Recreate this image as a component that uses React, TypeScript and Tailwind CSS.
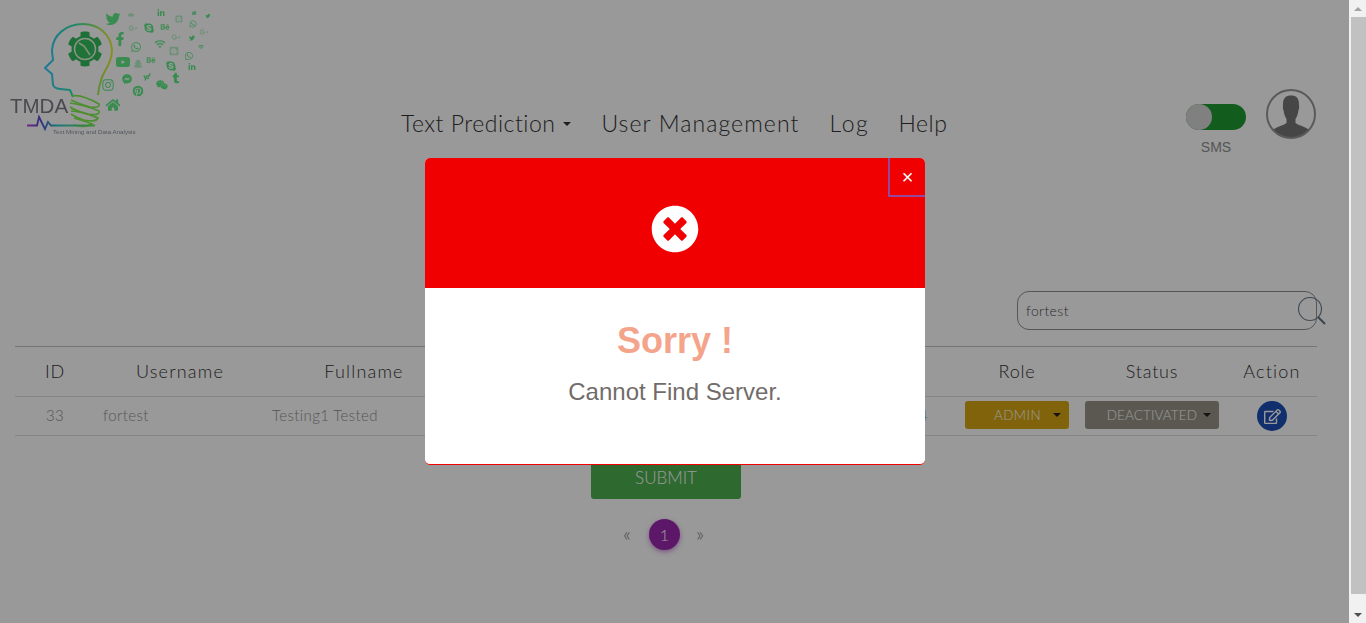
import {
  FaAndroid,
  FaBehance,
  FaBlogger,
  FaCog,
  FaFacebookF,
  FaFacebookMessenger,
  FaGooglePlusG,
  FaHome,
  FaInstagram,
  FaLinkedinIn,
  FaPinterest,
  FaRegEdit,
  FaSkype,
  FaSnapchatGhost,
  FaTimesCircle,
  FaTumblr,
  FaTwitter,
  FaWeixin,
  FaWhatsapp,
  FaWifi,
  FaYahoo,
  FaYoutube,
} from "react-icons/fa";

const dark = "#5fe884";
const light = "#b8f0c8";

// [icon, centre x, centre y, size, colour]
const logoIcons = [
  [FaTwitter, 113, 19, 15, dark],
  [FaAndroid, 131, 15, 7, light],
  [FaLinkedinIn, 161, 13, 8, dark],
  [FaBlogger, 179, 19, 8, light],
  [FaHome, 194, 13, 5, dark],
  [FaTwitter, 208, 16, 5, dark],
  [FaGooglePlusG, 133, 28, 9, light],
  [FaSkype, 149, 28, 11, dark],
  [FaBehance, 165, 27, 9, dark],
  [FaWhatsapp, 193, 24, 8, dark],
  [FaGooglePlusG, 204, 32, 9, light],
  [FaFacebookF, 120, 39, 14, dark],
  [FaGooglePlusG, 176, 37, 9, light],
  [FaWhatsapp, 136, 47, 11, dark],
  [FaWifi, 160, 44, 11, dark],
  [FaBlogger, 174, 51, 10, light],
  [FaTwitter, 192, 38, 6, dark],
  [FaWifi, 201, 47, 6, dark],
  [FaWhatsapp, 189, 56, 9, dark],
  [FaYoutube, 123, 62, 15, dark],
  [FaSnapchatGhost, 138, 64, 9, light],
  [FaBehance, 151, 60, 9, dark],
  [FaSkype, 171, 66, 11, dark],
  [FaLinkedinIn, 192, 67, 8, dark],
  [FaFacebookMessenger, 127, 79, 10, dark],
  [FaYahoo, 147, 77, 8, dark],
  [FaTumblr, 176, 78, 11, dark],
  [FaWeixin, 162, 85, 12, dark],
  [FaInstagram, 108, 85, 13, dark],
  [FaPinterest, 138, 91, 11, dark],
  [FaHome, 113, 105, 15, dark],
] as const;

function Logo() {
  return (
    <svg width="230" height="146" viewBox="0 0 230 146" className="block shrink-0 blur-[0.4px]">
      <defs>
        <linearGradient id="bulb" x1="45" y1="0" x2="112" y2="0" gradientUnits="userSpaceOnUse">
          <stop offset="0" stopColor="#33c8ff" />
          <stop offset="0.45" stopColor="#35e5a5" />
          <stop offset="1" stopColor="#e6ee33" />
        </linearGradient>
        <linearGradient id="ecg" x1="27" y1="0" x2="95" y2="0" gradientUnits="userSpaceOnUse">
          <stop offset="0" stopColor="#c040e0" />
          <stop offset="0.2" stopColor="#5050d0" />
          <stop offset="0.45" stopColor="#30c8d0" />
          <stop offset="1" stopColor="#70e850" />
        </linearGradient>
      </defs>
      <path
        d="M98 95C99 86 101 78 105 71C110 63 112 57 112 50C111 34 98 24 83 24C66 24 53 35 52 50C52 55 53 58 53 60L45 68L52 74L53 85C55 90 62 89 70 90L73 97"
        fill="none"
        stroke="url(#bulb)"
        strokeWidth="2"
        strokeLinejoin="round"
      />
      <g fill="none" stroke="#80ee50" strokeWidth="1.700">
        <path d="M72 96C80 94 92 100 99 104C100 107 96 108 90 107C82 105 75 102 71 100" />
        <path d="M70 103C78 104 92 108 99 111C100 115 94 115 88 114C80 112 74 110 70 107" />
        <path d="M71 111C80 111 90 115 98 118C96 122 90 121 84 120C79 119 74 116 71 114" />
        <path d="M74 118C80 120 88 122 92 124C88 127 80 127 74 125" />
      </g>
      <FaCog x={67} y={31} size={36} color="#33bb5c" />
      <circle cx="85" cy="49" r="10.500" fill="#35c060" stroke="#e8f5e0" strokeWidth="1.500" />
      <path d="M79 43L84 46L90 55" fill="none" stroke="#e0f0d0" strokeWidth="1.500" />
      {logoIcons.map(([Icon, x, y, size, color], i) => (
        <Icon key={i} x={x - size / 2} y={y - size / 2} size={size} color={color} />
      ))}
      <text x="10" y="113" fontFamily="Liberation Sans, sans-serif" fontSize="20.500" fill="#7b7b85">
        TMDA
      </text>
      <path
        d="M27 125.500L37 125.500L39 117L45 129L48 122L51 125.500L95 125.500"
        fill="none"
        stroke="url(#ecg)"
        strokeWidth="1.800"
      />
      <text x="53" y="134" fontFamily="Liberation Sans, sans-serif" fontSize="6.200" fill="#8a929c">
        Text Mining and Data Analysis
      </text>
    </svg>
  );
}

function Avatar() {
  return (
    <svg width="50" height="50" viewBox="0 0 50 50" className="block">
      <clipPath id="avatar">
        <circle cx="25" cy="25" r="24" />
      </clipPath>
      <g clipPath="url(#avatar)" fill="#767676">
        <path d="M25 6.500C20 6.500 17 9 17 15C17 18 16.500 20 17.500 21C18 25 19 28 20.500 30V34C17 37 8 38 5 43V50H45V43C42 38 33 37 29.500 34V30C31 28 32 25 32.500 21C33.500 20 33 18 33 15C33 9 30 6.500 25 6.500Z" />
      </g>
      <circle cx="25" cy="25" r="24" fill="none" stroke="#969696" strokeWidth="2" />
    </svg>
  );
}

function Caret({ className }: { className: string }) {
  return <span className={`inline-block border-x-[4px] border-t-[4px] border-x-transparent ${className}`} />;
}

function Scrollbar() {
  return (
    <div className="flex w-[17px] shrink-0 flex-col items-center bg-[#f1f1f1]">
      <div className="flex h-[17px] w-full items-center justify-center">
        <span className="border-x-[4px] border-b-[4px] border-x-transparent border-b-[#a3a3a3]" />
      </div>
      <div className="ml-[2px] h-[577px] w-[15px] bg-[#c1c1c1]" />
      <div className="mt-auto flex h-[17px] w-full items-center justify-center">
        <span className="border-x-[4px] border-t-[4px] border-x-transparent border-t-[#505050]" />
      </div>
    </div>
  );
}

function Modal() {
  return (
    <div className="absolute inset-0 bg-black/40">
      <div className="ml-[425px] mt-[158px] h-[307px] w-[500px] overflow-hidden rounded-[5px] border-b border-[#f00000] bg-white font-['Liberation_Sans',sans-serif]">
        <div className="relative flex h-[130px] items-center justify-center bg-[#f00000]">
          <FaTimesCircle size={48} color="#ffffff" className="ml-[-1px] mt-[12px]" />
          <button className="absolute right-0 top-0 flex h-[39px] w-[37px] items-center justify-center border-b-2 border-l-2 border-[#96489a] text-[20px] leading-none text-white">
            ×
          </button>
        </div>
        <div className="flex flex-col items-center pt-[31px]">
          <h2 className="text-[36px] font-bold leading-[44px] text-[#f5a48c]">Sorry !</h2>
          <p className="mt-[14px] text-[24px] leading-[30px] text-[#716c69]">Cannot Find Server.</p>
        </div>
      </div>
    </div>
  );
}

export default function App() {
  return (
    <div className="flex h-[623px] overflow-hidden bg-white font-['Lato',sans-serif] font-light">
      <div className="relative min-w-0 flex-1">
        <header className="flex h-[146px]">
          <Logo />
          <nav className="ml-[171px] mt-[108px] flex h-[30px] items-center text-[23px] text-[#333333]">
            <a className="flex items-center tracking-[0.5px]">
              Text Prediction
              <Caret className="ml-[8px] mt-[2px] border-t-[#333333]" />
            </a>
            <a className="ml-[30px] tracking-[1.1px]">User Management</a>
            <a className="ml-[30px] tracking-[1.6px]">Log</a>
            <a className="ml-[29px] tracking-[0.6px]">Help</a>
          </nav>
          <div className="ml-auto mr-[33px] mt-[89px] flex">
            <div className="mr-[20px] mt-[15px] flex flex-col items-center">
              <div className="flex h-[26px] w-[60px] justify-start rounded-full bg-[#1f9b32]">
                <span className="h-[26px] w-[26px] rounded-full bg-[#d6d6d6]" />
              </div>
              <span className="mt-[9px] font-['Liberation_Sans',sans-serif] text-[14px] leading-[17px] text-[#8e8e8e]">SMS</span>
            </div>
            <Avatar />
          </div>
        </header>

        <div className="mr-[32px] mt-[145px] flex justify-end">
          <div className="relative flex h-[39px] w-[300px] items-center rounded-[12px] border border-[#8f8f8f] pl-[8px] text-[14px] tracking-[0.4px] text-[#4a4a4a]">
            fortest
            <svg width="30" height="30" viewBox="0 0 30 30" fill="none" className="absolute right-[-12px] top-[5px]">
              <circle cx="12" cy="12" r="11.500" stroke="#6e7f90" strokeWidth="1.200" />
              <path d="M20 20L27 27" stroke="#606f80" strokeWidth="2" />
            </svg>
          </div>
        </div>

        <div className="ml-[15px] mt-[16px] w-[1302px] border-t border-[#c4c4c4] text-center">
          <div className="grid h-[50px] grid-cols-[80px_170px_198px_494px_120px_150px_90px] items-center border-b border-[#dddddd] text-[18px] tracking-[0.8px] text-[#333333]">
            <span>ID</span>
            <span className="tracking-[1.2px]">Username</span>
            <span className="tracking-[1.2px]">Fullname</span>
            <span />
            <span>Role</span>
            <span>Status</span>
            <span className="tracking-[1.2px]">Action</span>
          </div>
          <div className="grid h-[39px] grid-cols-[80px_170px_198px_494px_120px_150px_90px] items-center border-b border-[#dddddd] pb-[2px] text-[15px] tracking-[0.4px] text-[#909090]">
            <span>33</span>
            <span className="pl-[8px] text-left">fortest</span>
            <span className="pl-[7px] text-left">Testing1 Tested</span>
            <span className="pr-[29px] text-right text-[#7f97ad]">4</span>
            <div className="flex justify-center">
              <button className="flex h-[28px] w-[104px] items-center justify-end rounded-[3px] bg-[#d6a612] pr-[8px] text-[13.500px] text-white">
                ADMIN
                <Caret className="ml-[12px] border-t-[#222222]" />
              </button>
            </div>
            <div className="flex justify-center">
              <button className="flex h-[28px] w-[134px] items-center justify-end rounded-[3px] bg-[#969388] pr-[8px] text-[13.500px] tracking-[0.1px] text-white">
                DEACTIVATED
                <Caret className="ml-[6px] border-t-[#222222]" />
              </button>
            </div>
            <div className="flex justify-center">
              <span className="mt-[2px] flex h-[30px] w-[30px] items-center justify-center rounded-full bg-[#1b4fb5] text-white">
                <FaRegEdit size={17} className="ml-[1px]" />
              </span>
            </div>
          </div>
        </div>

        <button className="ml-[591px] mt-[22px] block h-[41px] w-[150px] rounded-[3px] bg-[#4eaf50] pb-[2px] text-[17px] text-white">
          SUBMIT
        </button>

        <div className="ml-[623px] mt-[20px] flex h-[31px] items-center text-[#808080]">
          <span className="w-[26px] pb-[4px] text-[20px]">«</span>
          <span className="flex h-[31px] w-[31px] items-center justify-center rounded-full bg-[#9c27b0] text-[16px] text-white shadow-[0_2px_5px_rgba(156,39,176,0.5)]">
            1
          </span>
          <span className="ml-[16px] pb-[4px] text-[20px]">»</span>
        </div>

        <Modal />
      </div>
      <Scrollbar />
    </div>
  );
}
